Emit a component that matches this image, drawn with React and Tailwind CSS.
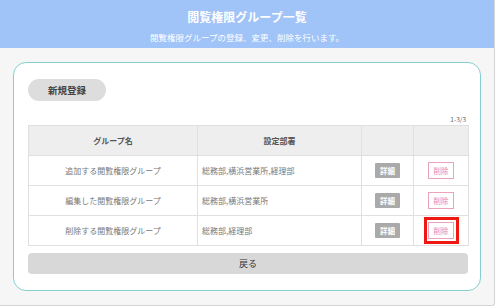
import React from "react";

const rows = [
  { name: "追加する閲覧権限グループ", depts: "総務部,横浜営業所,経理部" },
  { name: "編集した閲覧権限グループ", depts: "総務部,横浜営業所" },
  { name: "削除する閲覧権限グループ", depts: "総務部,経理部", highlight: true },
];

const font = {
  fontFamily: '"Noto Sans CJK JP", "Noto Sans", sans-serif',
};

const App = () => {
  return (
    <div className="w-[500px] h-[308px] bg-white" style={font}>
      <div className="w-[495px] h-[306px] bg-[#f6f6f6] border-r border-b border-[#d4d4d4] rounded-br-[3px] overflow-hidden">
        {/* Header */}
        <div className="h-[48px] bg-[#a0c3f8] flex flex-col items-center text-white">
          <h1 className="mt-[8px] text-[12px] leading-[18px] font-bold">
            閲覧権限グループ一覧
          </h1>
          <p className="mt-[5px] text-[8.5px] leading-[12px]">
            閲覧権限グループの登録、変更、削除を行います。
          </p>
        </div>

        {/* Card */}
        <div className="mx-[13px] mt-[14px] h-[229px] bg-white border border-[#86cfd0] rounded-[13px] px-[14px] pt-[16px]">
          <div className="h-[22px] flex">
            <button className="w-[78px] h-[22px] rounded-full bg-[#dddddd] text-[9.5px] leading-[22px] font-bold text-[#444]">
              新規登録
            </button>
          </div>

          <div className="mt-[13px] h-[10px] text-right text-[6.5px] leading-[10px] text-[#666]">
            1-3/3
          </div>

          <table className="mt-[1px] w-[440px] border-collapse text-[8px] leading-[12px] text-[#777] table-fixed">
            <colgroup>
              <col className="w-[169px]" />
              <col className="w-[164px]" />
              <col className="w-[52px]" />
              <col className="w-[55px]" />
            </colgroup>
            <thead>
              <tr className="h-[30px] bg-[#eeeeee]">
                <th className="border border-[#e0e0e0] font-bold text-[#555]">
                  グループ名
                </th>
                <th className="border border-[#e0e0e0] font-bold text-[#555]">
                  設定部署
                </th>
                <th className="border border-[#e0e0e0]"></th>
                <th className="border border-[#e0e0e0]"></th>
              </tr>
            </thead>
            <tbody>
              {rows.map((r) => (
                <tr key={r.name} className="h-[30px]">
                  <td className="border border-[#e0e0e0] text-center p-0">
                    {r.name}
                  </td>
                  <td className="border border-[#e0e0e0] pl-[4px] py-0">
                    {r.depts}
                  </td>
                  <td className="border border-[#e0e0e0] text-center p-0">
                    <span className="inline-flex align-middle items-center justify-center w-[25px] h-[15px] bg-[#aaaaaa] text-white text-[7.5px] font-bold rounded-[1px]">
                      詳細
                    </span>
                  </td>
                  <td className="border border-[#e0e0e0] text-center p-0">
                    {r.highlight ? (
                      <span className="inline-flex align-middle items-center justify-center w-[35px] h-[27px] border-[3px] border-[#ee1a12]">
                        <span className="inline-flex items-center justify-center w-[26px] h-[17px] border border-[#e9a3bd] text-[#e684a8] text-[7.5px] bg-white">
                          削除
                        </span>
                      </span>
                    ) : (
                      <span className="inline-flex align-middle items-center justify-center w-[26px] h-[17px] border border-[#e9a3bd] text-[#e684a8] text-[7.5px] bg-white">
                        削除
                      </span>
                    )}
                  </td>
                </tr>
              ))}
            </tbody>
          </table>

          <button className="mt-[7px] w-[440px] h-[21px] rounded-[4px] bg-[#d8d8d8] text-[9px] leading-[21px] text-[#333]">
            戻る
          </button>
        </div>
      </div>
    </div>
  );
};

export default App;
